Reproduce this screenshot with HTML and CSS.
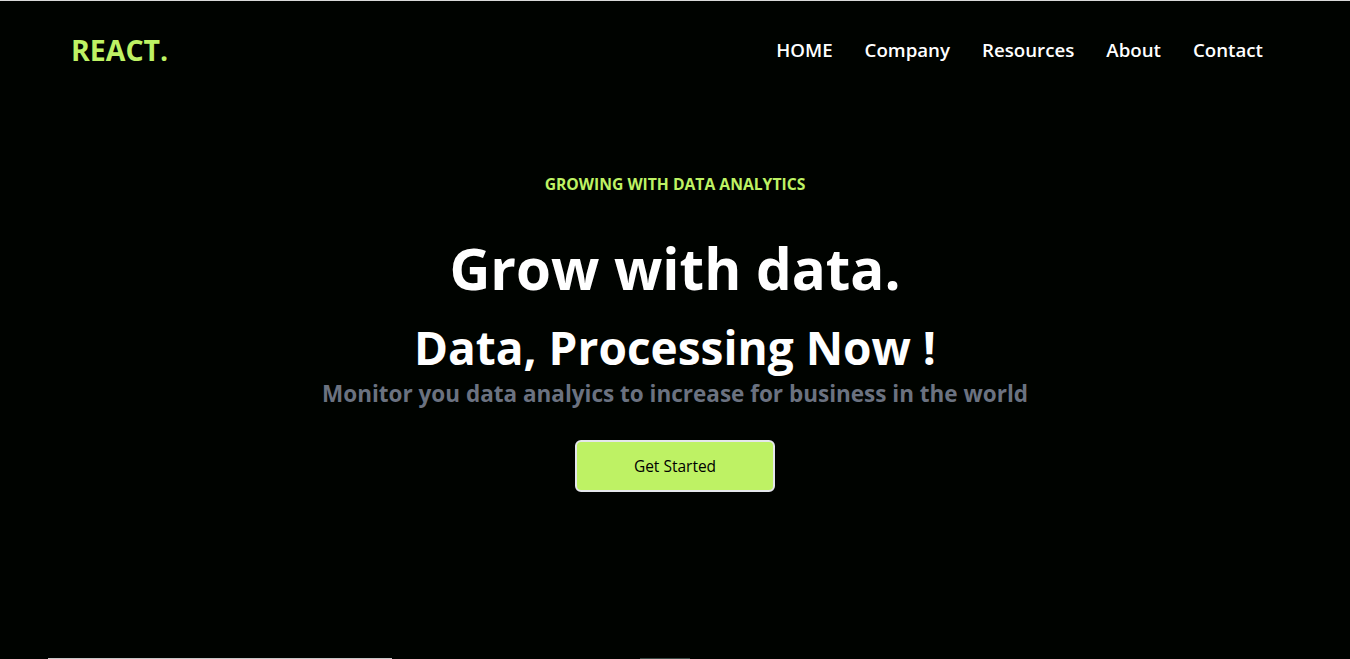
FILE: index.html
```html
<!DOCTYPE html>
<html lang="en">
<head>
<meta charset="utf-8">
<title>REACT.</title>
<link rel="stylesheet" href="styles.css">
</head>
<body>
<div class="page">
  <header class="nav">
    <h1 class="logo">REACT.</h1>
    <ul class="menu">
      <li>HOME</li>
      <li>Company</li>
      <li>Resources</li>
      <li>About</li>
      <li>Contact</li>
    </ul>
  </header>
  <main class="hero">
    <p class="eyebrow">GROWING WITH DATA ANALYTICS</p>
    <h2 class="title">Grow with data.</h2>
    <p class="typed">Data, Processing Now !</p>
    <p class="sub">Monitor you data analyics to increase for business in the world</p>
    <button class="cta">Get Started</button>
  </main>
  <div class="edge">
    <span class="seg seg-a"></span>
    <span class="seg seg-b"></span>
  </div>
</div>
</body>
</html>
```

FILE: styles.css
```css
* { box-sizing: border-box; }
html, body { margin: 0; padding: 0; }
body {
  background: #000300;
  color: #fff;
  font-family: "Open Sans", "Noto Sans", sans-serif;
  border-top: 1px solid #d9d9d9;
  overflow: hidden;
}
.page {
  height: 658px;
  display: flex;
  flex-direction: column;
}
.nav {
  max-width: 1240px;
  width: 100%;
  margin: 0 auto;
  padding: 2px 16px 0;
  height: 96px;
  display: flex;
  align-items: center;
  justify-content: space-between;
}
.logo {
  margin: 0;
  font-size: 28.5px;
  font-weight: 700;
  color: #bef264;
  line-height: 36px;
}
.menu {
  list-style: none;
  margin: 0;
  padding: 0;
  display: flex;
}
.menu li {
  padding: 16px;
  font-size: 18.7px;
  font-weight: 600;
  line-height: 24px;
}
.hero {
  flex: 1;
  display: flex;
  flex-direction: column;
  align-items: center;
  text-align: center;
  padding-top: 69px;
}
.eyebrow {
  margin: 0;
  padding: 8px;
  font-size: 15.7px;
  line-height: 20px;
  font-weight: 700;
  color: #bef264;
}
.title {
  margin: 0;
  padding: 37px 0 24px;
  font-size: 56.5px;
  line-height: 60px;
  font-weight: 700;
}
.typed {
  margin: 0;
  font-size: 46px;
  line-height: 48px;
  font-weight: 700;
}
.sub {
  margin: 7px 0 0;
  font-size: 22.5px;
  line-height: 32px;
  font-weight: 700;
  color: #6b7280;
}
.cta {
  margin-top: 30px;
  width: 200px;
  height: 52px;
  background: #bef264;
  border: 2px solid #e5e7eb;
  border-radius: 6px;
  font-family: inherit;
  font-size: 15.5px;
  font-weight: 500;
  color: #000;
}
.edge {
  height: 1px;
  display: flex;
}
.seg { display: block; height: 1px; }
.seg-a { margin-left: 48px; width: 344px; background: #c8c8c8; }
.seg-b { margin-left: 248px; width: 50px; background: #3a4a44; }
```
